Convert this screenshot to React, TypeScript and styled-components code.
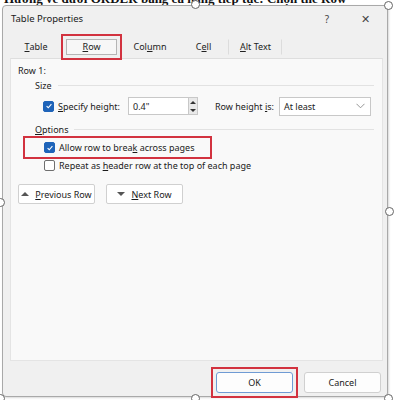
import React from 'react';
import styled, { createGlobalStyle } from 'styled-components';

const GlobalStyle = createGlobalStyle`
  html, body {
    margin: 0;
    padding: 0;
    background: #ffffff;
  }
  * {
    box-sizing: border-box;
  }
`;

const CheckIcon = () => (
  <svg width="8" height="8" viewBox="0 0 10 10">
    <path d="M2 5.2 L4.1 7.2 L8 2.8" fill="none" stroke="#fff" strokeWidth="1.4" />
  </svg>
);

const Checkbox: React.FC<{ checked?: boolean }> = ({ checked }) => (
  <CheckBoxBox $checked={checked}>{checked && <CheckIcon />}</CheckBoxBox>
);

const App: React.FC = () => {
  return (
    <>
      <GlobalStyle />
      <Page>
        <DocLine>
          <DocText>Hướng về dưới ORDER bằng cả hàng tiếp tục: Chọn thẻ Row</DocText>
        </DocLine>
        <Dialog>
          <TitleBar>
            <Title>Table Properties</Title>
            <TitleActions>
              <TitleAction>?</TitleAction>
              <TitleAction $big>✕</TitleAction>
            </TitleActions>
          </TitleBar>

          <TabRow>
            <Tab $w={50}>
              <u>T</u>able
            </Tab>
            <Highlight $pad={3}>
              <Tab $active $w={51}>
                <u>R</u>ow
              </Tab>
            </Highlight>
            <Tab $w={56}>
              Col<u>u</u>mn
            </Tab>
            <Tab $w={51} $sep>
              C<u>e</u>ll
            </Tab>
            <Tab $w={53} $sep>
              <u>A</u>lt Text
            </Tab>
          </TabRow>

          <Panel>
            <RowLabel>Row 1:</RowLabel>
            <Group>
              <GroupHeader>
                <span>Size</span>
                <Rule />
              </GroupHeader>
              <SizeRow>
                <Checkbox checked />
                <FieldLabel $w={66}>
                  <u>S</u>pecify height:
                </FieldLabel>
                <Spin>
                  <SpinInput>0.4"</SpinInput>
                  <SpinArrows>
                    <Arrow $up />
                    <Arrow />
                  </SpinArrows>
                </Spin>
                <FieldLabel $w={60} $left={13}>
                  Row height <u>i</u>s:
                </FieldLabel>
                <Select>
                  <span>At least</span>
                  <svg width="9" height="6" viewBox="0 0 9 6">
                    <path d="M0.5 0.8 L4.5 4.8 L8.5 0.8" fill="none" stroke="#8a8a8a" strokeWidth="0.9" />
                  </svg>
                </Select>
              </SizeRow>
            </Group>

            <Group>
              <GroupHeader>
                <span>
                  <u>O</u>ptions
                </span>
                <Rule />
              </GroupHeader>
              <OptionList>
                <OptionHighlight>
                  <OptionRow>
                    <Checkbox checked />
                    <span>
                      Allow row to brea<u>k</u> across pages
                    </span>
                  </OptionRow>
                </OptionHighlight>
                <OptionRow>
                  <Checkbox />
                  <span>
                    Repeat as <u>h</u>eader row at the top of each page
                  </span>
                </OptionRow>
              </OptionList>
            </Group>

            <NavRow>
              <NavButton>
                <Tri $up />
                <span>
                  <u>P</u>revious Row
                </span>
              </NavButton>
              <NavButton>
                <Tri />
                <span>
                  <u>N</u>ext Row
                </span>
              </NavButton>
            </NavRow>
          </Panel>

          <Footer>
            <Highlight $pad={3}>
              <FooterButton $primary>OK</FooterButton>
            </Highlight>
            <FooterButton>Cancel</FooterButton>
          </Footer>
        </Dialog>

        <Handle style={{ left: 191, top: 0 }} />
        <Handle style={{ left: 384, top: 1 }} />
        <Handle style={{ left: -4, top: 198 }} />
        <Handle style={{ left: 385, top: 207 }} />
        <Handle style={{ left: 191, top: 394 }} />
        <Handle style={{ left: 384, top: 394 }} />
        <Handle style={{ left: -4, top: 394 }} />
      </Page>
    </>
  );
};

const Page = styled.div`
  position: relative;
  width: 394px;
  height: 400px;
  overflow: hidden;
  background: #ffffff;
  font-family: 'Noto Sans', 'Open Sans', sans-serif;
  font-size: 9px;
  color: #1b1b1b;
`;

const DocLine = styled.div`
  height: 5px;
  overflow: hidden;
  padding-left: 4px;
`;

const DocText = styled.div`
  margin-top: -8px;
  font-family: 'Liberation Serif', serif;
  font-weight: bold;
  font-size: 13px;
  line-height: 13px;
  white-space: nowrap;
  color: #111;
`;

const Dialog = styled.div`
  position: relative;
  display: flex;
  flex-direction: column;
  width: 386px;
  height: 392px;
  margin-left: 2px;
  background: #f0f0f0;
  border: 1px solid #a9a9a9;
  border-radius: 4px;
  box-shadow: 1px 1px 2px rgba(0, 0, 0, 0.15);
`;

const TitleBar = styled.div`
  display: flex;
  align-items: center;
  justify-content: space-between;
  height: 25px;
  padding: 0 8px 0 8px;
`;

const Title = styled.span`
  font-size: 9.5px;
  color: #1a1a1a;
`;

const TitleActions = styled.div`
  display: flex;
  align-items: center;
  gap: 32px;
  padding-right: 9px;
`;

const TitleAction = styled.span<{ $big?: boolean }>`
  font-size: ${(p) => (p.$big ? '11px' : '10px')};
  color: #444;
`;

const TabRow = styled.div`
  display: flex;
  align-items: center;
  height: 31px;
  padding-left: 8px;
  margin-bottom: -4px;
  position: relative;
  z-index: 1;
`;

const Tab = styled.div<{ $active?: boolean; $sep?: boolean; $w: number }>`
  display: flex;
  align-items: center;
  justify-content: center;
  width: ${(p) => p.$w}px;
  height: 16px;
  font-size: 9px;
  color: #222;
  border: 1px solid ${(p) => (p.$active ? '#b5b5b5' : 'transparent')};
  border-right-color: ${(p) => (p.$active ? '#b5b5b5' : p.$sep ? '#dcdcdc' : 'transparent')};
  background: ${(p) => (p.$active ? '#f7f7f7' : 'transparent')};
  & u {
    text-underline-offset: 1px;
  }
`;

const Highlight = styled.div<{ $pad: number }>`
  display: inline-flex;
  padding: ${(p) => p.$pad}px;
  border: 2px solid #d2323f;
`;

const OptionHighlight = styled.div`
  display: flex;
  width: 189px;
  margin-left: -21px;
  padding: 3px 0 3px 19px;
  border: 2px solid #d2323f;
`;

const Panel = styled.div`
  flex: 1;
  margin: 0 4px 0 7px;
  padding: 5px 8px 0 7px;
  background: #f9f9f9;
  border: 1px solid #e4e4e4;
  border-top-color: #dedede;
  display: flex;
  flex-direction: column;
`;

const RowLabel = styled.div`
  height: 13px;
  line-height: 13px;
`;

const FieldLabel = styled.span<{ $w: number; $left?: number }>`
  flex: none;
  width: ${(p) => p.$w}px;
  margin-left: ${(p) => p.$left ?? 0}px;
  white-space: nowrap;
`;

const Group = styled.div`
  display: flex;
  flex-direction: column;
  padding-left: 17px;
`;

const GroupHeader = styled.div`
  display: flex;
  align-items: center;
  gap: 6px;
  margin-top: 2px;
  height: 12px;
`;

const Rule = styled.div`
  flex: 1;
  height: 1px;
  background: #e2e2e2;
`;

const SizeRow = styled.div`
  display: flex;
  align-items: center;
  height: 30px;
  padding-left: 8px;
  gap: 4px;
`;

const CheckBoxBox = styled.div<{ $checked?: boolean }>`
  flex: none;
  display: flex;
  align-items: center;
  justify-content: center;
  width: 11px;
  height: 11px;
  border-radius: 2px;
  background: ${(p) => (p.$checked ? '#1f64b9' : '#ffffff')};
  border: 1px solid ${(p) => (p.$checked ? '#1f64b9' : '#6f6f6f')};
`;

const Spin = styled.div`
  display: flex;
  height: 18px;
`;

const SpinInput = styled.div`
  display: flex;
  align-items: center;
  width: 61px;
  padding-left: 4px;
  background: #ffffff;
  border: 1px solid #c8c8c8;
`;

const SpinArrows = styled.div`
  display: flex;
  flex-direction: column;
  justify-content: space-around;
  align-items: center;
  width: 9px;
  background: #e9e9e9;
  border: 1px solid #c8c8c8;
  border-left: none;
`;

const Arrow = styled.div<{ $up?: boolean }>`
  width: 0;
  height: 0;
  border-left: 3px solid transparent;
  border-right: 3px solid transparent;
  ${(p) => (p.$up ? 'border-bottom: 3px solid #333;' : 'border-top: 3px solid #333;')}
`;

const Select = styled.div`
  display: flex;
  align-items: center;
  justify-content: space-between;
  width: 92px;
  height: 19px;
  padding: 0 5px 0 4px;
  background: #ffffff;
  border: 1px solid #c8c8c8;
`;

const OptionList = styled.div`
  display: flex;
  flex-direction: column;
  align-items: flex-start;
  padding-left: 9px;
  margin-top: 1px;
`;

const OptionRow = styled.div`
  display: flex;
  align-items: center;
  gap: 4px;
  height: 13px;
  white-space: nowrap;
  & + & {
    height: 15px;
  }
  & u {
    text-underline-offset: 1px;
  }
`;

const NavRow = styled.div`
  display: flex;
  gap: 11px;
  margin-top: 12px;
`;

const NavButton = styled.div`
  display: flex;
  align-items: center;
  justify-content: center;
  gap: 6px;
  width: 77px;
  height: 20px;
  background: #ffffff;
  border: 1px solid #d0d0d0;
  border-radius: 2px;
`;

const Tri = styled.div<{ $up?: boolean }>`
  width: 0;
  height: 0;
  border-left: 4px solid transparent;
  border-right: 4px solid transparent;
  ${(p) => (p.$up ? 'border-bottom: 4px solid #555;' : 'border-top: 4px solid #555;')}
`;

const Footer = styled.div`
  display: flex;
  align-items: center;
  justify-content: flex-end;
  gap: 6px;
  height: 35px;
  padding: 7px 6px 0 0;
`;

const FooterButton = styled.div<{ $primary?: boolean }>`
  display: flex;
  align-items: center;
  justify-content: center;
  width: 77px;
  height: 21px;
  background: #fdfdfd;
  border: 1px solid ${(p) => (p.$primary ? '#6f9bd4' : '#d0d0d0')};
  border-radius: 3px;
`;

const Handle = styled.div`
  position: absolute;
  width: 9px;
  height: 9px;
  border-radius: 50%;
  border: 1px solid #666;
  background: #fff;
`;

export default App;
